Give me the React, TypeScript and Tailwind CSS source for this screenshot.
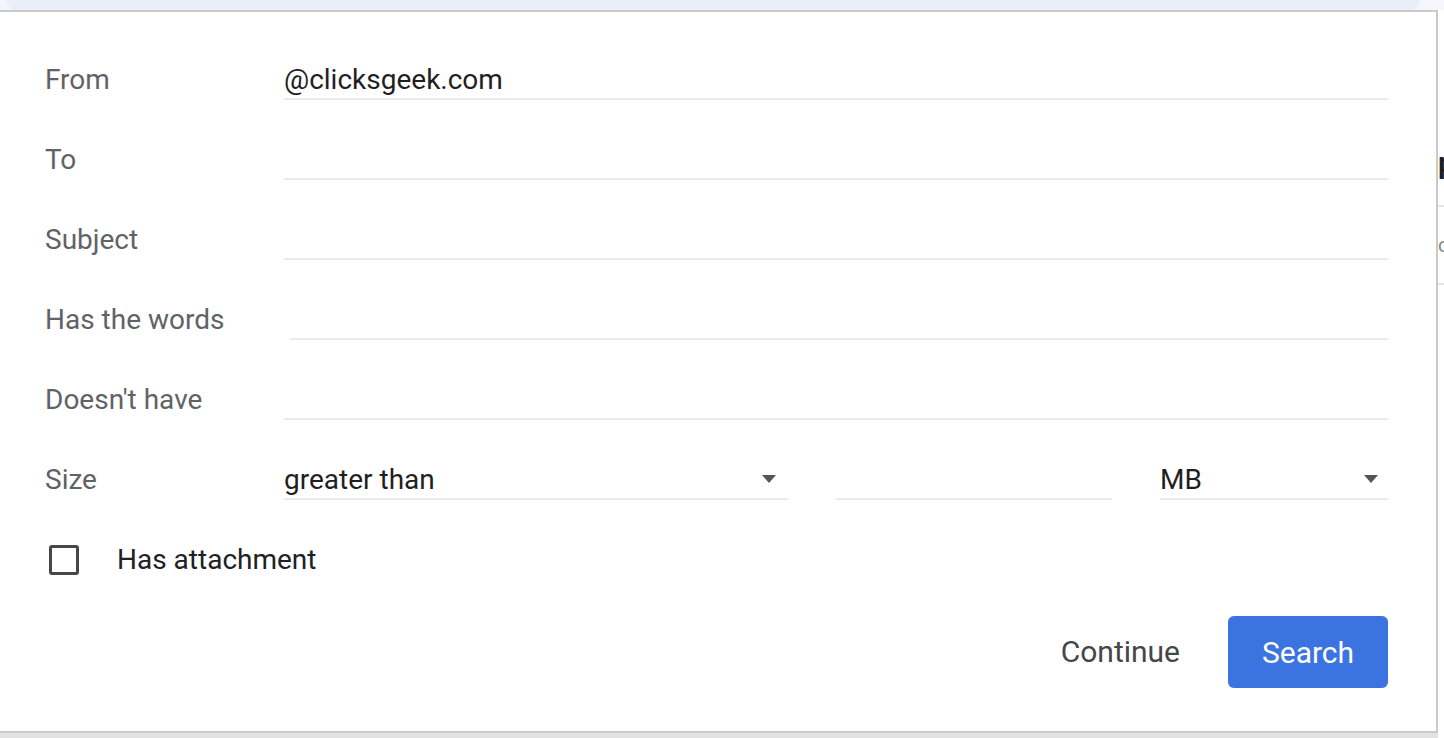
import React from "react";

const font = { fontFamily: "Roboto, 'Liberation Sans', sans-serif" };

function Field({ value, className = "" }: { value?: string; className?: string }) {
  return (
    <div className={`h-[40px] border-b-2 border-[#ebebeb] rounded-[1px] ${className}`}>
      <div className="pt-[2px] leading-[36px] text-[28px] text-[#1f1f1f] whitespace-nowrap">{value ?? "\u00a0"}</div>
    </div>
  );
}

function Caret() {
  return (
    <svg width="14" height="8" viewBox="0 0 14 8" className="shrink-0">
      <path d="M0 0 L14 0 L7 8 Z" fill="#555555" />
    </svg>
  );
}

function Row({ label, children }: { label: string; children: React.ReactNode }) {
  return (
    <div className="flex items-center h-[80px]">
      <div className="w-[239px] shrink-0 text-[28px] leading-[36px] text-[#5f6368]">{label}</div>
      <div className="flex-1 flex items-center">{children}</div>
    </div>
  );
}

export default function App() {
  return (
    <div className="w-[1444px] h-[738px] overflow-hidden bg-white flex flex-col" style={font}>
      <div className="h-[10px] shrink-0 bg-[#f4f6fb] overflow-hidden">
        <div className="h-[40px] mt-[-26px] ml-[5px] mr-[23px] rounded-[28px] bg-[#e9eef8]" />
      </div>
      <div className="flex flex-1 min-h-0">
        <div className="w-[1438px] shrink-0 flex flex-col">
          <div className="bg-white border-t-2 border-r-2 border-b-2 border-[#cacaca] pt-[28px] pl-[45px] pr-[48px] pb-[43px]">
            <Row label="From">
              <Field value="@clicksgeek.com" className="flex-1" />
            </Row>
            <Row label="To">
              <Field className="flex-1" />
            </Row>
            <Row label="Subject">
              <Field className="flex-1" />
            </Row>
            <Row label="Has the words">
              <Field className="flex-1 ml-[6px]" />
            </Row>
            <Row label="Doesn't have">
              <Field className="flex-1" />
            </Row>
            <Row label="Size">
              <div className="w-[504px] h-[40px] border-b-2 border-[#ebebeb] flex items-center pr-[12px]">
                <div className="flex-1 pt-[2px] leading-[36px] text-[28px] text-[#1f1f1f]">greater than</div>
                <Caret />
              </div>
              <div className="w-[276px] h-[40px] border-b-2 border-[#ebebeb] ml-[48px]" />
              <div className="flex-1 h-[40px] border-b-2 border-[#ebebeb] ml-[48px] flex items-center pr-[10px]">
                <div className="flex-1 pt-[2px] leading-[36px] text-[28px] text-[#1f1f1f]">MB</div>
                <Caret />
              </div>
            </Row>
            <div className="flex items-center h-[80px]">
              <div className="w-[30px] h-[30px] ml-[4px] border-[3px] border-[#474747] rounded-[3px]" />
              <div className="ml-[38px] text-[28px] leading-[36px] text-[#202124]">Has attachment</div>
            </div>
            <div className="flex items-center justify-end mt-[16px]">
              <div className="text-[30px] text-[#444746] mr-[48px] leading-[36px]">Continue</div>
              <div className="w-[160px] h-[72px] rounded-[6px] bg-[#3b74e0] flex items-center justify-center text-white text-[30px]">
                Search
              </div>
            </div>
          </div>
          <div className="flex-1 bg-[#e2e2e2]" />
        </div>
        <div className="flex-1 overflow-hidden bg-[#f7f8fa]">
          <div className="w-[200px] bg-white h-full">
            <div className="h-[133px]" />
            <div className="text-[30px] font-bold text-[#1f1f1f] leading-[40px]">ps</div>
            <div className="h-[24px] border-b-2 border-[#e5e5e5]" />
            <div className="h-[78px] border-b-2 border-[#e5e5e5] flex items-center text-[20px] text-[#888]">c</div>
          </div>
        </div>
      </div>
    </div>
  );
}
